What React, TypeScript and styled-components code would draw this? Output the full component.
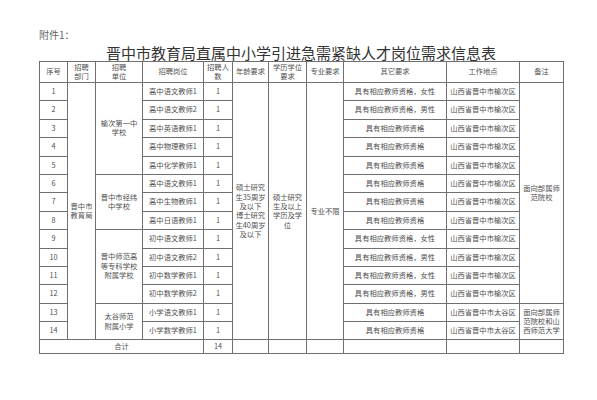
import styled, { createGlobalStyle } from "styled-components";

const GlobalStyle = createGlobalStyle`
  html, body {
    margin: 0;
    padding: 0;
    background: #fff;
  }
  body {
    font-family: "Noto Sans CJK SC", "Noto Sans", sans-serif;
  }
`;

const Page = styled.div`
  width: 597px;
  height: 400px;
  padding: 28px 0 0 39px;
  box-sizing: border-box;
  background: #fff;
`;

const Attach = styled.div`
  font-size: 10px;
  line-height: 14px;
  color: #666;
  height: 16px;
`;

const Title = styled.h1`
  width: 524px;
  margin: 0;
  text-align: center;
  font-size: 15px;
  font-weight: 400;
  line-height: 17px;
  letter-spacing: 0;
  color: #333;
`;

const Sheet = styled.table`
  border-collapse: collapse;
  table-layout: fixed;
  width: 524px;
  color: #505050;
  font-size: 7.3px;
  line-height: 9.3px;
`;

const Row = styled.tr<{ $h: number }>`
  height: ${(p) => p.$h}px;
`;

const Cell = styled.td`
  border: 1px solid #707070;
  padding: 0;
  text-align: center;
  vertical-align: middle;
  white-space: pre-line;
  overflow: hidden;
`;

const HeadCell = styled(Cell).attrs({ as: "th" })`
  font-weight: 400;
  color: #505050;
`;

const widths = [28, 28, 47, 61, 29, 36, 38, 37, 103, 73, 44];

const heads = [
  "序号",
  "招聘\n部门",
  "招聘\n单位",
  "招聘岗位",
  "招聘人\n数",
  "年龄要求",
  "学历学位\n要求",
  "专业要求",
  "其它要求",
  "工作地点",
  "备注",
];

const base = "具有相应教师资格";
const yuci = "山西省晋中市榆次区";
const taigu = "山西省晋中市太谷区";

const rows = [
  { post: "高中语文教师1", other: base + "，女性", place: yuci },
  { post: "高中语文教师2", other: base + "，男性", place: yuci },
  { post: "高中英语教师1", other: base, place: yuci },
  { post: "高中物理教师1", other: base, place: yuci },
  { post: "高中化学教师1", other: base, place: yuci },
  { post: "高中语文教师1", other: base, place: yuci },
  { post: "高中生物教师1", other: base, place: yuci },
  { post: "高中日语教师1", other: base, place: yuci },
  { post: "初中语文教师1", other: base + "，女性", place: yuci },
  { post: "初中语文教师2", other: base + "，男性", place: yuci },
  { post: "初中数学教师1", other: base + "，女性", place: yuci },
  { post: "初中数学教师2", other: base + "，男性", place: yuci },
  { post: "小学语文教师1", other: base, place: taigu },
  { post: "小学数学教师1", other: base, place: taigu },
];

// merged cells keyed by the row where they start
const schools: Record<number, { text: string; span: number }> = {
  0: { text: "榆次第一中\n学校", span: 5 },
  5: { text: "晋中市经纬\n中学校", span: 3 },
  8: { text: "晋中师范高\n等专科学校\n附属学校", span: 4 },
  12: { text: "太谷师范\n附属小学", span: 2 },
};

const notes: Record<number, { text: string; span: number }> = {
  0: { text: "面向部属师\n范院校", span: 12 },
  12: { text: "面向部属师\n范院校和山\n西师范大学", span: 2 },
};

export default function App() {
  return (
    <>
      <GlobalStyle />
      <Page>
        <Attach>附件1：</Attach>
        <Title>晋中市教育局直属中小学引进急需紧缺人才岗位需求信息表</Title>
        <Sheet>
          <colgroup>
            {widths.map((w, i) => (
              <col key={i} style={{ width: w }} />
            ))}
          </colgroup>
          <thead>
            <Row $h={21}>
              {heads.map((h) => (
                <HeadCell key={h}>{h}</HeadCell>
              ))}
            </Row>
          </thead>
          <tbody>
            {rows.map((r, i) => (
              <Row $h={18.4} key={i}>
                <Cell>{i + 1}</Cell>
                {i === 0 && <Cell rowSpan={14}>{"晋中市\n教育局"}</Cell>}
                {schools[i] && (
                  <Cell rowSpan={schools[i].span}>{schools[i].text}</Cell>
                )}
                <Cell>{r.post}</Cell>
                <Cell>1</Cell>
                {i === 0 && (
                  <>
                    <Cell rowSpan={14}>
                      {"硕士研究\n生35周岁\n及以下\n博士研究\n生40周岁\n及以下"}
                    </Cell>
                    <Cell rowSpan={14}>{"硕士研究\n生及以上\n学历及学\n位"}</Cell>
                    <Cell rowSpan={14}>专业不限</Cell>
                  </>
                )}
                <Cell>{r.other}</Cell>
                <Cell>{r.place}</Cell>
                {notes[i] && <Cell rowSpan={notes[i].span}>{notes[i].text}</Cell>}
              </Row>
            ))}
            <Row $h={14}>
              <Cell colSpan={4}>合计</Cell>
              <Cell>14</Cell>
              <Cell />
              <Cell />
              <Cell />
              <Cell />
              <Cell />
              <Cell />
            </Row>
          </tbody>
        </Sheet>
      </Page>
    </>
  );
}
